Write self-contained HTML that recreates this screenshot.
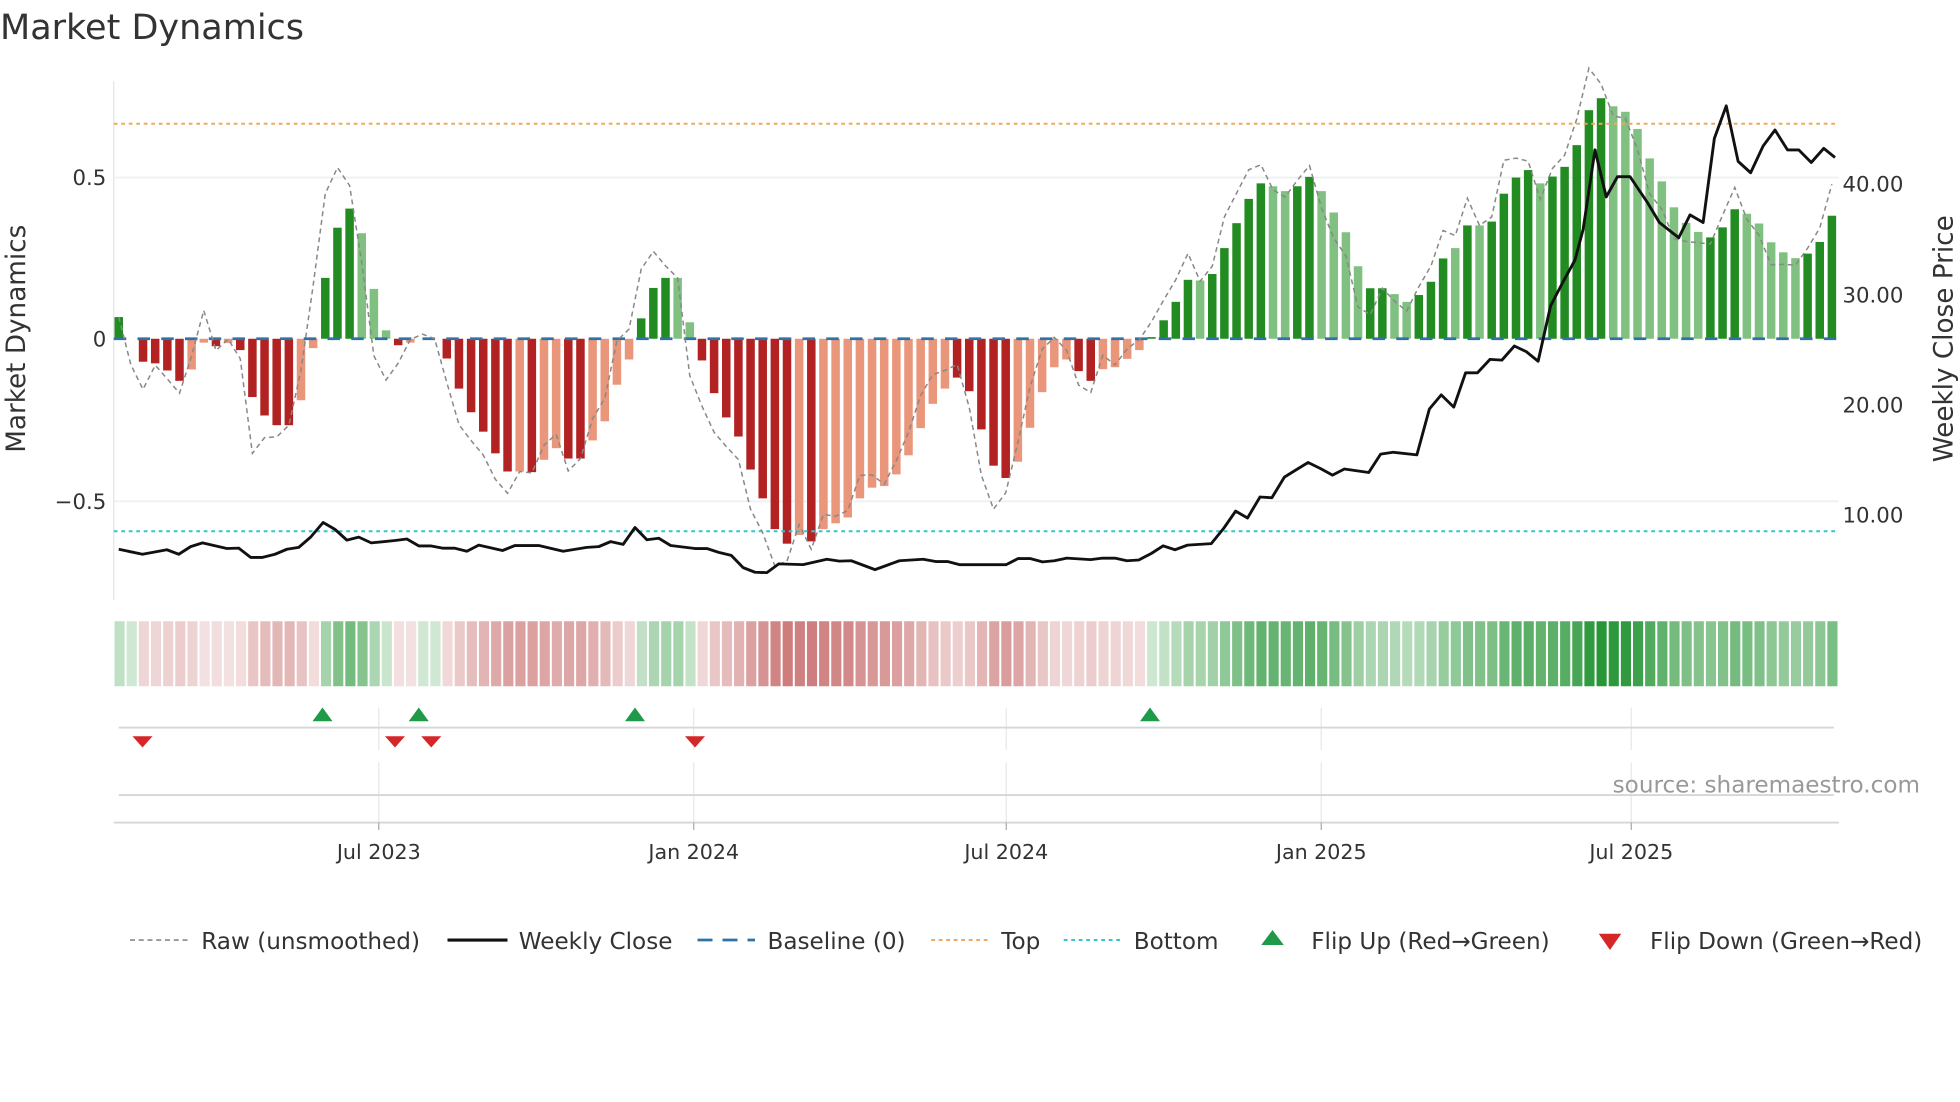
<!DOCTYPE html>
<html><head><meta charset="utf-8">
<style>
html,body{margin:0;padding:0;background:#fff;}
svg{display:block;}
text{font-family:"DejaVu Sans","Liberation Sans",sans-serif;fill:#333;}
</style></head>
<body>
<svg id="s" width="1960" height="1102" viewBox="0 0 1568 881.6" xmlns="http://www.w3.org/2000/svg">
<rect width="1568" height="882" fill="#fff"/>
<text x="0" y="31" font-size="28">Market Dynamics</text>
<line x1="91" y1="65" x2="91" y2="480" stroke="#e3e5e8" stroke-width="1"/>
<line x1="91" y1="142" x2="1471" y2="142" stroke="#eef0f3" stroke-width="1.5"/>
<line x1="91" y1="401" x2="1471" y2="401" stroke="#eef0f3" stroke-width="1.5"/>
<text x="85" y="148" font-size="17" text-anchor="end">0.5</text>
<text x="85" y="277" font-size="17" text-anchor="end">0</text>
<text x="85" y="407" font-size="17" text-anchor="end">−0.5</text>
<text x="1474" y="153" font-size="17">40.00</text>
<text x="1474" y="242" font-size="17">30.00</text>
<text x="1474" y="330" font-size="17">20.00</text>
<text x="1474" y="418" font-size="17">10.00</text>
<text transform="translate(20,271) rotate(-90)" font-size="21" text-anchor="middle">Market Dynamics</text>
<text transform="translate(1562,271) rotate(-90)" font-size="21" text-anchor="middle">Weekly Close Price</text>
<g id="bars"></g>
<line x1="91" y1="271" x2="1471" y2="271" stroke="#2f72a8" stroke-width="2.2" stroke-dasharray="10,9"/>
<line x1="91" y1="99" x2="1471" y2="99" stroke="#f0a860" stroke-width="1.6" stroke-dasharray="3,3"/>
<line x1="91" y1="425" x2="1471" y2="425" stroke="#2fc6d6" stroke-width="1.6" stroke-dasharray="3,3"/>
<polyline id="raw" fill="none" stroke="#888" stroke-width="1.2" stroke-dasharray="4,3"/>
<polyline id="price" fill="none" stroke="#111" stroke-width="2.3" stroke-linejoin="round"/>
<g id="heat"></g>
<g stroke="#e6e8ec" stroke-width="1">
<line x1="303" y1="566" x2="303" y2="600"/><line x1="555" y1="566" x2="555" y2="600"/>
<line x1="805" y1="566" x2="805" y2="600"/><line x1="1057" y1="566" x2="1057" y2="600"/>
<line x1="1305" y1="566" x2="1305" y2="600"/>
<line x1="303" y1="610" x2="303" y2="658"/><line x1="555" y1="610" x2="555" y2="658"/>
<line x1="805" y1="610" x2="805" y2="658"/><line x1="1057" y1="610" x2="1057" y2="658"/>
<line x1="1305" y1="610" x2="1305" y2="658"/>
</g>
<line x1="95" y1="582" x2="1467" y2="582" stroke="#d4d6da" stroke-width="1.5"/>
<line x1="95" y1="636" x2="1467" y2="636" stroke="#d4d6da" stroke-width="1.5"/>
<line x1="91" y1="658" x2="1471" y2="658" stroke="#d4d6da" stroke-width="1.5"/>
<g stroke="#aaa" stroke-width="1">
<line x1="303" y1="658" x2="303" y2="664"/><line x1="555" y1="658" x2="555" y2="664"/>
<line x1="805" y1="658" x2="805" y2="664"/><line x1="1057" y1="658" x2="1057" y2="664"/>
<line x1="1305" y1="658" x2="1305" y2="664"/>
</g>
<g fill="#1e9a48">
<polygon points="258,566 266,577 250,577"/><polygon points="335,566 343,577 327,577"/>
<polygon points="508,566 516,577 500,577"/><polygon points="920,566 928,577 912,577"/>
</g>
<g fill="#d62728">
<polygon points="106,589 122,589 114,598"/><polygon points="308,589 324,589 316,598"/>
<polygon points="337,589 353,589 345,598"/><polygon points="548,589 564,589 556,598"/>
</g>
<text x="1536" y="634" font-size="18.5" text-anchor="end" style="fill:#999">source: sharemaestro.com</text>
<g font-size="16.5" text-anchor="middle">
<text x="303" y="687">Jul 2023</text><text x="555" y="687">Jan 2024</text>
<text x="805" y="687">Jul 2024</text><text x="1057" y="687">Jan 2025</text>
<text x="1305" y="687">Jul 2025</text>
</g>
<line x1="104" y1="752" x2="150" y2="752" stroke="#888" stroke-width="1.3" stroke-dasharray="4,3"/>
<text x="161" y="759" font-size="18.5">Raw (unsmoothed)</text>
<line x1="358" y1="752" x2="406" y2="752" stroke="#111" stroke-width="2.5"/>
<text x="415" y="759" font-size="18.5">Weekly Close</text>
<line x1="558" y1="752" x2="604" y2="752" stroke="#2f72a8" stroke-width="2.2" stroke-dasharray="12,8"/>
<text x="614" y="759" font-size="18.5">Baseline (0)</text>
<line x1="745" y1="752" x2="790" y2="752" stroke="#f0a860" stroke-width="1.6" stroke-dasharray="3,3"/>
<text x="801" y="759" font-size="18.5">Top</text>
<line x1="851" y1="752" x2="896" y2="752" stroke="#2fc6d6" stroke-width="1.6" stroke-dasharray="3,3"/>
<text x="907" y="759" font-size="18.5">Bottom</text>
<polygon points="1018,744 1027,756 1009,756" fill="#1e9a48"/>
<text x="1049" y="759" font-size="18.5">Flip Up (Red→Green)</text>
<polygon points="1279,747 1297,747 1288,760" fill="#d62728"/>
<text x="1320" y="759" font-size="18.5">Flip Down (Green→Red)</text>
</svg>
<script>
(function(){
var V=[[.067,1],[0,0],[-.071,1],[-.076,1],[-.098,1],[-.13,1],[-.095,0],[-.012,0],[-.023,1],[-.013,0],[-.035,1],[-.18,1],[-.237,1],[-.267,1],[-.267,1],[-.19,0],[-.029,0],[.188,1],[.343,1],[.402,1],[.326,0],[.154,0],[.026,0],[-.02,1],[-.012,0],[0,0],[0,0],[-.061,1],[-.154,1],[-.227,1],[-.287,1],[-.354,1],[-.41,1],[-.41,0],[-.412,1],[-.374,0],[-.338,0],[-.37,1],[-.37,1],[-.314,0],[-.255,0],[-.142,0],[-.064,0],[.063,1],[.157,1],[.188,1],[.188,0],[.051,0],[-.067,1],[-.168,1],[-.243,1],[-.302,1],[-.404,1],[-.493,1],[-.588,1],[-.633,1],[-.606,0],[-.626,1],[-.588,0],[-.57,0],[-.552,0],[-.493,0],[-.46,0],[-.455,0],[-.419,0],[-.36,0],[-.276,0],[-.201,0],[-.154,0],[-.12,1],[-.162,1],[-.28,1],[-.392,1],[-.43,1],[-.38,0],[-.275,0],[-.165,0],[-.088,0],[-.064,0],[-.1,1],[-.13,1],[-.094,0],[-.088,0],[-.062,0],[-.035,0],[.005,1],[.057,1],[.114,1],[.182,1],[.18,0],[.2,1],[.28,1],[.357,1],[.432,1],[.48,1],[.471,0],[.456,0],[.471,1],[.5,1],[.456,0],[.39,0],[.329,0],[.224,0],[.156,1],[.156,1],[.138,0],[.114,0],[.135,1],[.176,1],[.248,1],[.28,0],[.35,1],[.35,0],[.362,1],[.448,1],[.498,1],[.521,1],[.48,0],[.501,1],[.531,1],[.598,1],[.706,1],[.743,1],[.718,0],[.701,0],[.648,0],[.557,0],[.486,0],[.406,0],[.358,0],[.33,0],[.313,1],[.344,1],[.4,1],[.386,0],[.356,0],[.298,0],[.267,0],[.249,0],[.263,1],[.299,1],[.38,1]];
var NS="http://www.w3.org/2000/svg",b=document.getElementById('bars'),h=document.getElementById('heat');
var Z=271,U=259,raw=[];
function mk(p,a){var e=document.createElementNS(NS,'rect');for(var k in a)e.setAttribute(k,a[k]);p.appendChild(e);}
for(var i=0;i<V.length;i++){
 var v=V[i][0],d=V[i][1],x=95+9.72*i;
 var c=v>=0?(d?'#228b22':'#80c080'):(d?'#b22222':'#e9967a');
 if(v!==0){var y=Z-v*U;mk(b,{x:x-3.4,y:Math.min(y,Z),width:6.8,height:Math.abs(v*U),fill:c});}
 var t,r,g,bb;
 if(v>=0){t=Math.min(1,0.22+v*1.05);r=255+(40-255)*t;g=255+(150-255)*t;bb=255+(55-255)*t;}
 else{t=Math.min(1,0.18+Math.abs(v)*1.0);r=255+(195-255)*t;g=255+(95-255)*t;bb=255+(95-255)*t;}
 mk(h,{x:91+i*(1380/142)+0.6,y:497,width:1380/142-1.6,height:52,fill:'rgb('+(r|0)+','+(g|0)+','+(bb|0)+')'});
 var pv=i>0?V[i-1][0]:v;var rv=v+1.2*(v-pv);
 raw.push(x.toFixed(1)+','+(Z-rv*U).toFixed(1));
}
document.getElementById('raw').setAttribute('points',raw.join(' '));
var A=[[190,1437],[228,1450],[267,1438],[286,1450],[305,1430],[324,1420],[363,1435],[382,1434],[401,1458],[420,1458],[440,1450],[459,1437],[478,1432],[497,1405],[517,1367],[536,1385],[555,1413],[574,1405],[594,1420],[632,1414],[651,1410],[670,1428],[689,1428],[708,1434],[727,1434],[747,1442],[766,1426],[804,1440],[824,1427],[862,1427],[901,1442],[939,1432],[958,1430],[977,1417],[997,1424],[1016,1380],[1035,1412],[1054,1408],[1073,1427],[1112,1435],[1131,1435],[1150,1445],[1170,1453],[1189,1485],[1208,1497],[1227,1498],[1246,1475],[1285,1477],[1323,1463],[1343,1468],[1362,1467],[1400,1490],[1439,1467],[1477,1463],[1497,1469],[1516,1469],[1535,1477],[1568,1477]];
var B=[[42,1477],[61,1461],[80,1461],[100,1470],[119,1467],[139,1460],[177,1464],[196,1460],[216,1460],[235,1467],[254,1465],[274,1448],[293,1428],[312,1438],[332,1426],[370,1422],[390,1382],[409,1337],[428,1355],[448,1300],[467,1302],[487,1248],[506,1229],[525,1210],[545,1226],[564,1243],[583,1227],[622,1236],[641,1188],[661,1183],[699,1190],[719,1070],[738,1033],[758,1065],[777,975],[796,975],[816,940],[835,942],[855,905],[874,920],[893,945],[913,800],[932,740],[952,680],[965,600],[984,392],[1002,515],[1020,462],[1040,462],[1068,530],[1087,582],[1118,622],[1136,562],[1157,582],[1175,362],[1194,277],[1213,422],[1233,452],[1253,382],[1272,340],[1292,392],[1310,392],[1330,425],[1350,388],[1368,412]];
var P=[];A.forEach(function(p){P.push((p[0]/2).toFixed(1)+','+(p[1]/3.27).toFixed(1));});
B.forEach(function(p){P.push((784+p[0]/2).toFixed(1)+','+(p[1]/3.27).toFixed(1));});
document.getElementById('price').setAttribute('points',P.join(' '));
})();
</script>
</body></html>
